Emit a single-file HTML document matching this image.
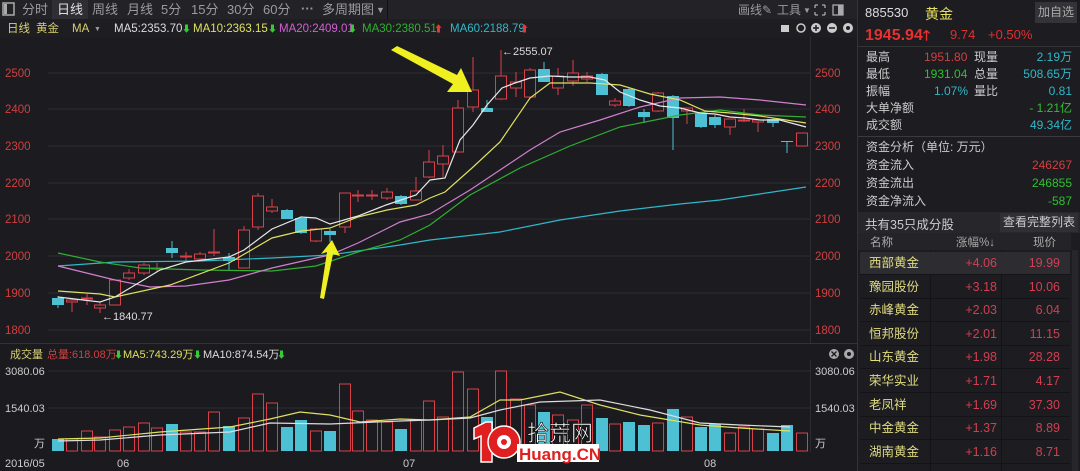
<!DOCTYPE html>
<html style="overflow:hidden;width:1080px;height:471px"><head><meta charset="utf-8">
<style>
*{margin:0;padding:0;box-sizing:border-box}
body{width:1080px;height:471px;background:#1a1a1f;overflow:hidden;font-family:"Liberation Sans","Noto Sans CJK SC",sans-serif;position:relative;color:#ccc}
.a{position:absolute;white-space:nowrap}
#rp{position:absolute;left:857px;top:0;width:223px;height:471px;background:#1c1c21;border-left:1px solid #333;overflow:hidden}
.r{position:absolute;left:8px;right:8px;font-size:12px;height:17px;line-height:17px}
.r .k{position:absolute;left:0;color:#ccc}
.r .v{position:absolute}
.row{position:absolute;left:2px;width:210px;height:23px;line-height:23px;font-size:12.5px;border-bottom:1px solid #141418}
.row span{position:absolute}
</style></head><body>
<svg width="857" height="471" style="position:absolute;left:0;top:0" font-family="Liberation Sans, Noto Sans CJK SC, sans-serif">
<rect x="0" y="0" width="857" height="19" fill="#222227"/>
<rect x="52" y="0" width="36" height="19" fill="#2e2e34"/>
<rect x="0" y="19" width="857" height="18" fill="#1d1d22"/>
<rect x="0" y="37" width="810" height="306" fill="#1b1b20"/>
<rect x="0" y="343" width="857" height="1" fill="#333"/>
<rect x="3" y="3" width="11" height="12" fill="none" stroke="#aaa" stroke-width="1.5"/><rect x="4" y="4" width="3" height="10" fill="#aaa"/>
<g font-size="13" fill="#9a9aa0">
<text x="22" y="14">分时</text><text x="57" y="14" fill="#e0e0e0">日线</text><text x="92" y="14">周线</text><text x="127" y="14">月线</text><text x="161" y="14">5分</text><text x="191" y="14">15分</text><text x="227" y="14">30分</text><text x="263" y="14">60分</text><text x="301" y="13" font-weight="bold">···</text><text x="322" y="14">多周期图</text><text x="376" y="13" font-size="9">▼</text>
<text x="738" y="14" font-size="12">画线✎</text><text x="777" y="14" font-size="12">工具</text><text x="803" y="13" font-size="8">▼</text>
</g>
<rect x="387" y="0" width="1" height="19" fill="#111"/>
<g fill="none" stroke="#aaa" stroke-width="1.3"><path d="M815 5h3M815 5v3M825 5h-3M825 5v3M815 15h3M815 15v-3M825 15h-3M825 15v-3"/><rect x="833" y="5" width="10" height="10"/></g><rect x="838" y="5" width="5" height="10" fill="#aaa"/>
<g font-size="11.5">
<text x="7" y="32" fill="#d8d070">日线</text><text x="36" y="32" fill="#d8d070">黄金</text><text x="72" y="32" fill="#d8d070">MA</text><text x="94" y="31" fill="#999" font-size="7">▼</text>
<text x="114" y="32" fill="#ddd">MA5:2353.70</text><text x="182" y="32" fill="#3c3" font-size="9">⬇</text>
<text x="193" y="32" fill="#e0e060">MA10:2363.15</text><text x="268" y="32" fill="#3c3" font-size="9">⬇</text>
<text x="279" y="32" fill="#d060d0">MA20:2409.01</text><text x="348" y="32" fill="#3c3" font-size="9">⬇</text>
<text x="362" y="32" fill="#30b030">MA30:2380.51</text><text x="434" y="32" fill="#e33" font-size="9">⬆</text>
<text x="450" y="32" fill="#30b8c8">MA60:2188.79</text><text x="520" y="32" fill="#e33" font-size="9">⬆</text>
</g>
<g fill="#ccc"><rect x="781" y="25" width="8" height="7"/><circle cx="801" cy="28" r="4" fill="none" stroke="#ccc" stroke-width="1.5"/><circle cx="816" cy="28" r="5"/><circle cx="832" cy="28" r="5"/><circle cx="848" cy="28" r="5"/></g>
<g stroke="#1b1b20" stroke-width="1.5"><path d="M813 28h6M816 25v6M829 28h6"/></g><circle cx="848" cy="28" r="2" fill="#1d1d22"/>
<g stroke="#2c2c33" stroke-width="1">
<path d="M48 73H810M48 109H810M48 146H810M48 183H810M48 219H810M48 256H810M48 293H810M48 330H810"/>
<path d="M810.5 37V343M48 371H810M48 408H810M810.5 360V452"/>
</g>
<g font-size="11.5" fill="#d04040">
<text x="5" y="77">2500</text><text x="5" y="113">2400</text><text x="5" y="150">2300</text><text x="5" y="187">2200</text><text x="5" y="223">2100</text><text x="5" y="260">2000</text><text x="5" y="297">1900</text><text x="5" y="334">1800</text>
<text x="815" y="77">2500</text><text x="815" y="113">2400</text><text x="815" y="150">2300</text><text x="815" y="187">2200</text><text x="815" y="223">2100</text><text x="815" y="260">2000</text><text x="815" y="297">1900</text><text x="815" y="334">1800</text>
</g>
<g id="cand"></g>
<g fill="none" stroke-width="1.2">
<polyline stroke="#30b8c8" points="58,266 115,262 200,261 272,258 330,255 400,245 430,240 500,232 560,220 620,211 680,204 720,200 806,187"/>
<polyline stroke="#30b030" points="58,253 100,262 140,268 200,270 272,271 316,266 358,252 400,240 430,225 470,195 520,168 570,146 620,127 680,115 720,110 760,115 806,117"/>
<polyline stroke="#d080d0" points="58,266 115,280 150,287 186,286 229,280 272,268 316,258 330,255 358,243 400,222 430,214 470,190 500,170 530,150 560,132 600,120 640,107 680,98 720,97 760,100 806,105"/>
<polyline stroke="#e0e060" points="58,291 100,294 115,297 170,285 229,263 272,238 301,231 330,228 358,217 387,210 416,205 430,198 445,192 472,168 500,142 530,98 550,83 590,83 620,85 650,94 680,100 705,111 730,113 760,116 806,123"/>
<polyline stroke="#e8e8e8" points="58,297 100,302 115,297 160,270 186,262 229,257 244,250 272,229 301,217 316,218 330,224 358,216 386,205 416,195 430,180 445,178 460,140 473,125 487,105 502,88 515,83 530,78 550,76 570,77 590,77 605,80 620,92 640,100 660,106 680,108 700,113 715,114 730,117 745,118 760,120 780,120 806,127"/>
</g>
<text x="102" y="320" font-size="11" fill="#ddd">←1840.77</text>
<text x="502" y="55" font-size="11" fill="#ddd">←2555.07</text>
<polygon points="391,50 397,46 457,75 461,68 472,92 447,92 453,84" fill="#f0f020"/>
<polygon points="320,298 327,252 321,254 332,240 340,256 333,254 324,299" fill="#f0f020"/>
<g font-size="11">
<text x="10" y="358" fill="#d8d070">成交量</text><text x="47" y="358" fill="#d04040">总量:618.08万</text><text x="114" y="358" fill="#3c3" font-size="9">⬇</text>
<text x="123" y="358" fill="#e0e060">MA5:743.29万</text><text x="193" y="358" fill="#3c3" font-size="9">⬇</text>
<text x="203" y="358" fill="#ddd">MA10:874.54万</text><text x="277" y="358" fill="#3c3" font-size="9">⬇</text>
<text x="5" y="375" fill="#ccc">3080.06</text><text x="5" y="412" fill="#ccc">1540.03</text><text x="34" y="447" fill="#ccc">万</text>
<text x="815" y="375" fill="#ccc">3080.06</text><text x="815" y="412" fill="#ccc">1540.03</text><text x="815" y="447" fill="#ccc">万</text>
<text x="5" y="467" fill="#ccc">2016/05</text><text x="117" y="467" fill="#ccc">06</text><text x="403" y="467" fill="#ccc">07</text><text x="704" y="467" fill="#ccc">08</text>
</g>
<circle cx="834" cy="354" r="5" fill="#aaa"/><path d="M831.5 351.5l5 5M836.5 351.5l-5 5" stroke="#1a1a1f" stroke-width="1.3"/>
<circle cx="849" cy="354" r="5" fill="#aaa"/><circle cx="849" cy="354" r="2" fill="#1a1a1f"/>
<g id="vol"></g>
<g fill="none" stroke-width="1.2">
<polyline stroke="#e0e060" points="58,439 100,438 160,432 230,427 270,419 300,412 330,415 360,422 400,419 430,420 470,417 500,400 520,400 560,392 600,405 640,415 700,425 740,428 790,431"/>
<polyline stroke="#ddd" points="58,441 100,440 160,435 230,432 270,423 330,424 400,421 430,420 470,418 500,410 540,402 600,400 650,410 700,423 740,425 790,427"/>
</g>
<path d="M474 428l12-6h6v40h-11v-26l-7 3z" fill="#e02020" stroke="#fff" stroke-width="1.5"/>
<circle cx="504" cy="442" r="16" fill="#e02020" stroke="#fff" stroke-width="1.5"/><circle cx="504" cy="442" r="7" fill="#fff"/><circle cx="504" cy="442" r="3" fill="#e02020"/>
<text x="527" y="441" font-size="22" fill="#fff" stroke="#000" stroke-width="0.6">拾荒网</text>
<rect x="517" y="444" width="82" height="18" fill="#fff"/>
<text x="519" y="460" font-size="17" font-weight="bold" fill="#e02020">Huang.CN</text>
</svg>
<div id="rp">
<div class="a" style="left:7px;top:5px;font-size:13px;color:#ddd">885530</div>
<div class="a" style="left:67px;top:4px;font-size:14px;color:#e8e060">黄金</div>
<div class="a" style="left:177px;top:2px;width:42px;height:21px;background:#333338;color:#aaa;font-size:12px;line-height:21px;text-align:center">加自选</div>
<div class="a" style="left:7px;top:25px;font-size:16px;font-weight:bold;color:#e83030">1945.94<span style="font-size:14px">🡑</span></div>
<div class="a" style="left:92px;top:27px;font-size:13px;color:#e03030">9.74</div>
<div class="a" style="left:130px;top:27px;font-size:13px;color:#e03030">+0.50%</div>
<div class="a" style="left:0;top:46px;width:223px;height:1px;background:#333"></div>
<div class="r" style="top:49px"><span class="k">最高</span><span class="v" style="left:58px;color:#d04040">1951.80</span><span class="v" style="left:108px">现量</span><span class="v" style="right:0;color:#30b8c8">2.19万</span></div>
<div class="r" style="top:66px"><span class="k">最低</span><span class="v" style="left:58px;color:#30c030">1931.04</span><span class="v" style="left:108px">总量</span><span class="v" style="right:0;color:#30b8c8">508.65万</span></div>
<div class="r" style="top:83px"><span class="k">振幅</span><span class="v" style="left:68px;color:#30b8c8">1.07%</span><span class="v" style="left:108px">量比</span><span class="v" style="right:0;color:#30b8c8">0.81</span></div>
<div class="r" style="top:100px"><span class="k">大单净额</span><span class="v" style="right:0;color:#30c030">- 1.21亿</span></div>
<div class="r" style="top:117px"><span class="k">成交额</span><span class="v" style="right:0;color:#30b8c8">49.34亿</span></div>
<div class="a" style="left:0;top:136px;width:223px;height:1px;background:#3a3a40"></div>
<div class="r" style="top:139px"><span class="k">资金分析（单位: 万元）</span></div>
<div class="r" style="top:157px"><span class="k">资金流入</span><span class="v" style="right:0;color:#d04040">246267</span></div>
<div class="r" style="top:175px"><span class="k">资金流出</span><span class="v" style="right:0;color:#30c030">246855</span></div>
<div class="r" style="top:193px"><span class="k">资金净流入</span><span class="v" style="right:0;color:#30c030">-587</span></div>
<div class="a" style="left:0;top:212px;width:223px;height:21px;background:#26262b"></div>
<div class="a" style="left:7px;top:214px;font-size:12.5px;color:#ccc">共有35只成分股</div>
<div class="a" style="left:142px;top:213px;width:78px;height:19px;background:#2f2f35;font-size:12px;line-height:19px;text-align:center;color:#ccc">查看完整列表</div>
<div class="a" style="left:0;top:233px;width:213px;height:17px;background:#232328"></div>
<div class="a" style="left:12px;top:234px;font-size:11.5px;color:#aaa">名称</div>
<div class="a" style="left:98px;top:234px;font-size:11.5px;color:#aaa">涨幅%↓</div>
<div class="a" style="left:175px;top:234px;font-size:11.5px;color:#aaa">现价</div>
<div class="a" style="left:72px;top:250px;width:1px;height:221px;background:#141418"></div>
<div class="a" style="left:143px;top:250px;width:1px;height:221px;background:#141418"></div>
<div class="a" style="left:214px;top:250px;width:6px;height:221px;background:#26262b"></div>
<div id="list"></div>
</div>
<script>
var C=[[58,298,305,296,308,0],[72,300,302,298,312,1],[87,298,299,294,305,1],[100,305,308,302,313,1],[115,280,305,279,305,1],[129,273,278,269,280,1],[144,265,273,263,275,1],[157,268,269,263,272,1],[172,248,253,241,258,0],[186,256,257,252,262,1],[200,254,259,252,260,1],[214,252,253,229,256,1],[229,257,261,253,270,0],[244,230,268,226,268,1],[258,196,227,193,230,1],[272,207,211,199,213,1],[287,210,219,209,219,0],[301,218,233,217,234,0],[316,229,241,228,242,1],[330,231,235,229,242,0],[345,193,227,193,233,1],[358,195,196,190,202,1],[372,195,196,190,200,1],[387,192,198,188,200,1],[401,196,204,195,205,0],[416,191,200,177,200,1],[429,162,177,150,178,1],[443,156,164,145,177,1],[458,108,152,100,152,1],[473,90,107,57,112,1],[487,108,112,100,112,0],[501,76,99,50,100,1],[516,82,88,72,97,1],[530,70,97,68,98,1],[544,69,82,62,82,0],[558,76,88,68,95,1],[573,73,81,60,86,1],[587,76,79,72,82,1],[602,74,95,73,95,0],[615,101,105,98,107,1],[629,89,106,88,107,0],[644,112,117,109,123,0],[658,93,111,92,112,1],[673,96,118,95,150,0],[687,108,111,108,124,1],[701,113,127,112,128,0],[715,117,125,115,128,0],[730,119,127,119,135,1],[744,120,121,109,122,1],[758,120,122,119,132,1],[773,119,123,118,127,0],[787,141,142,141,153,0],[802,133,146,133,146,1]];
var V=[439,439,431,437,430,427,423,428,424,432,432,412,426,418,394,403,427,420,431,431,384,411,420,422,429,420,401,417,372,389,417,371,399,405,412,415,420,405,418,424,422,425,423,409,417,427,424,433,427,429,433,425,433];
var s='',R='#d8404a',B='#4ec0d4';
C.forEach(function(c){var col=c[5]?R:B;s+='<line x1="'+c[0]+'" x2="'+c[0]+'" y1="'+c[3]+'" y2="'+c[4]+'" stroke="'+col+'"/>';var h=Math.max(1,c[2]-c[1]);if(c[5])s+='<rect x="'+(c[0]-5.5)+'" y="'+c[1]+'" width="11" height="'+h+'" fill="#1b1b20" stroke="'+R+'"/>';else s+='<rect x="'+(c[0]-6)+'" y="'+c[1]+'" width="12" height="'+h+'" fill="'+B+'"/>';});
document.getElementById('cand').innerHTML=s;s='';
C.forEach(function(c,i){var y=V[i],h=451-y;if(c[5])s+='<rect x="'+(c[0]-5.5)+'" y="'+y+'" width="11" height="'+h+'" fill="none" stroke="'+R+'"/>';else s+='<rect x="'+(c[0]-6)+'" y="'+y+'" width="12" height="'+h+'" fill="'+B+'"/>';});
document.getElementById('vol').innerHTML=s;
var L=[['西部黄金','+4.06','19.99'],['豫园股份','+3.18','10.06'],['赤峰黄金','+2.03','6.04'],['恒邦股份','+2.01','11.15'],['山东黄金','+1.98','28.28'],['荣华实业','+1.71','4.17'],['老凤祥','+1.69','37.30'],['中金黄金','+1.37','8.89'],['湖南黄金','+1.16','8.71']];
s='';L.forEach(function(r,i){s+='<div class="row" style="top:'+(252+i*23.6)+'px;'+(i==0?'background:#2c2c31':'')+'"><span style="left:9px;color:#e0dc80">'+r[0]+'</span><span style="right:73px;color:#d04050">'+r[1]+'</span><span style="right:10px;color:#d04050">'+r[2]+'</span></div>';});
document.getElementById('list').innerHTML=s;
</script>
</body></html>
